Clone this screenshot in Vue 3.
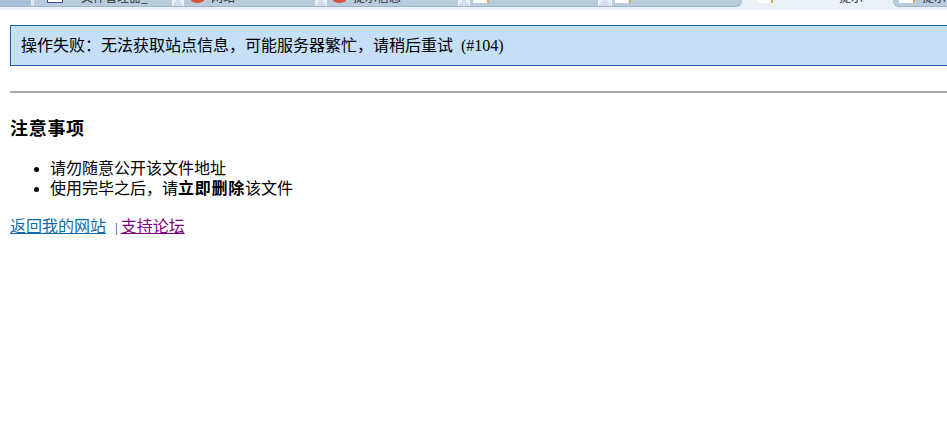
<template>
  <div class="page">
    <div class="tabstrip">
      <template v-for="tab in tabs" :key="tab.id">
        <div
          class="tab"
          :class="{ active: tab.active, pinned: tab.pinned, 'left-round': tab.leftRound, 'right-round': tab.rightRound }"
          :style="{ width: tab.width + 'px', paddingLeft: tab.pad + 'px' }"
        >
          <span v-if="tab.icon" class="tab-icon" :class="tab.icon"></span>
          <span v-if="tab.title" class="tab-title" :style="{ marginLeft: tab.gap + 'px' }">{{ tab.title }}</span>
        </div>
        <div v-if="tab.slant" class="slant" :style="{ width: tab.slant + 'px' }"></div>
      </template>
    </div>
    <div class="content">
      <div class="message">操作失败：无法获取站点信息，可能服务器繁忙，请稍后重试<span class="code">(#104)</span></div>
      <hr />
      <h3>注意事项</h3>
      <ul>
        <li>请勿随意公开该文件地址</li>
        <li>使用完毕之后，请<b>立即删除</b>该文件</li>
      </ul>
      <p class="links">
        <a class="link" href="#">返回我的网站</a><span class="sep">|</span><a class="link visited" href="#">支持论坛</a>
      </p>
    </div>
  </div>
</template>

<script setup>
const tabs = [
  { id: 1, width: 31, pad: 0, pinned: true, slant: 3 },
  { id: 2, title: '文件管理器_', icon: 'blue', width: 138, pad: 13, gap: 18, slant: 12 },
  { id: 3, title: '网站', icon: 'red', width: 131, pad: 7, gap: 7, slant: 12 },
  { id: 4, title: '提示信息', icon: 'red', width: 131, pad: 6, gap: 7, slant: 12 },
  { id: 5, icon: 'page', width: 128, pad: 3, slant: 14 },
  { id: 6, icon: 'page', width: 130, pad: 3, rightRound: true },
  { id: 7, title: '提示', icon: 'page', width: 151, pad: 15, gap: 66, active: true },
  { id: 8, title: '提示', icon: 'page', width: 54, pad: 6, gap: 7, leftRound: true }
]
</script>

<style scoped>
.page {
  width: 947px;
  height: 436px;
  overflow: hidden;
  background: #fff;
  color: #000;
  font-family: "Liberation Serif", "Noto Sans CJK SC", serif;
  font-size: 16px;
}
.tabstrip {
  display: flex;
  height: 7px;
  padding-bottom: 3px;
  background: #eaf1f8;
  overflow: hidden;
}
.tab {
  flex: none;
  height: 7px;
  display: flex;
  align-items: flex-end;
  padding-bottom: 3px;
  box-sizing: border-box;
  background: #b9ccde;
  border-bottom: 1px solid #a0b4ca;
  overflow: hidden;
}
.tab.pinned {
  background: #a9c1d8;
}
.tab.active {
  background: #eaf1f8;
  border-bottom: none;
  padding-bottom: 4px;
}
.tab.left-round {
  border-bottom-left-radius: 6px;
}
.tab.right-round {
  border-bottom-right-radius: 6px;
}
.slant {
  flex: none;
  height: 7px;
  box-sizing: border-box;
  background: #d3e0ec;
  border-bottom: 1px solid #a0b4ca;
  clip-path: polygon(35% 0, 65% 0, 100% 100%, 0 100%);
}
.tab-icon {
  flex: none;
  width: 16px;
  height: 3px;
  box-sizing: border-box;
}
.tab-icon.blue {
  background: #fff;
  border: 1px solid #3a46a8;
  border-top: none;
}
.tab-icon.red {
  width: 13px;
  background: #d9503c;
  border-radius: 0 0 50% 50% / 0 0 100% 100%;
}
.tab-icon.page {
  background: #fff;
  border-right: 2px solid #e8a64a;
}
.tab-title {
  flex: none;
  font-family: "Noto Sans CJK SC", sans-serif;
  font-size: 12px;
  line-height: 12px;
  color: #333;
  white-space: nowrap;
}
.content {
  padding: 15px 10px 0;
}
.message {
  margin-right: -40px;
  height: 41px;
  box-sizing: border-box;
  padding: 0 10px;
  line-height: 39px;
  background: #c5dff7;
  border: 1px solid #1a64a6;
}
.code {
  margin-left: 8px;
}
hr {
  margin: 25px -40px 0 0;
  height: 2px;
  border: none;
  background: #a8a8a8;
}
h3 {
  margin: 18px 0 0;
  font-size: 18px;
  letter-spacing: 0.7px;
  line-height: 36px;
}
ul {
  margin: 12px 0 0;
  padding-left: 40px;
}
li {
  line-height: 20px;
}
b {
  letter-spacing: 0.75px;
}
.links {
  margin: 18px 0 0;
  line-height: 20px;
}
.link {
  color: #0f6aa8;
}
.link.visited {
  color: #800080;
}
.sep {
  font-size: 13px;
  color: #333;
  margin: 0 3px 0 9px;
}
</style>
